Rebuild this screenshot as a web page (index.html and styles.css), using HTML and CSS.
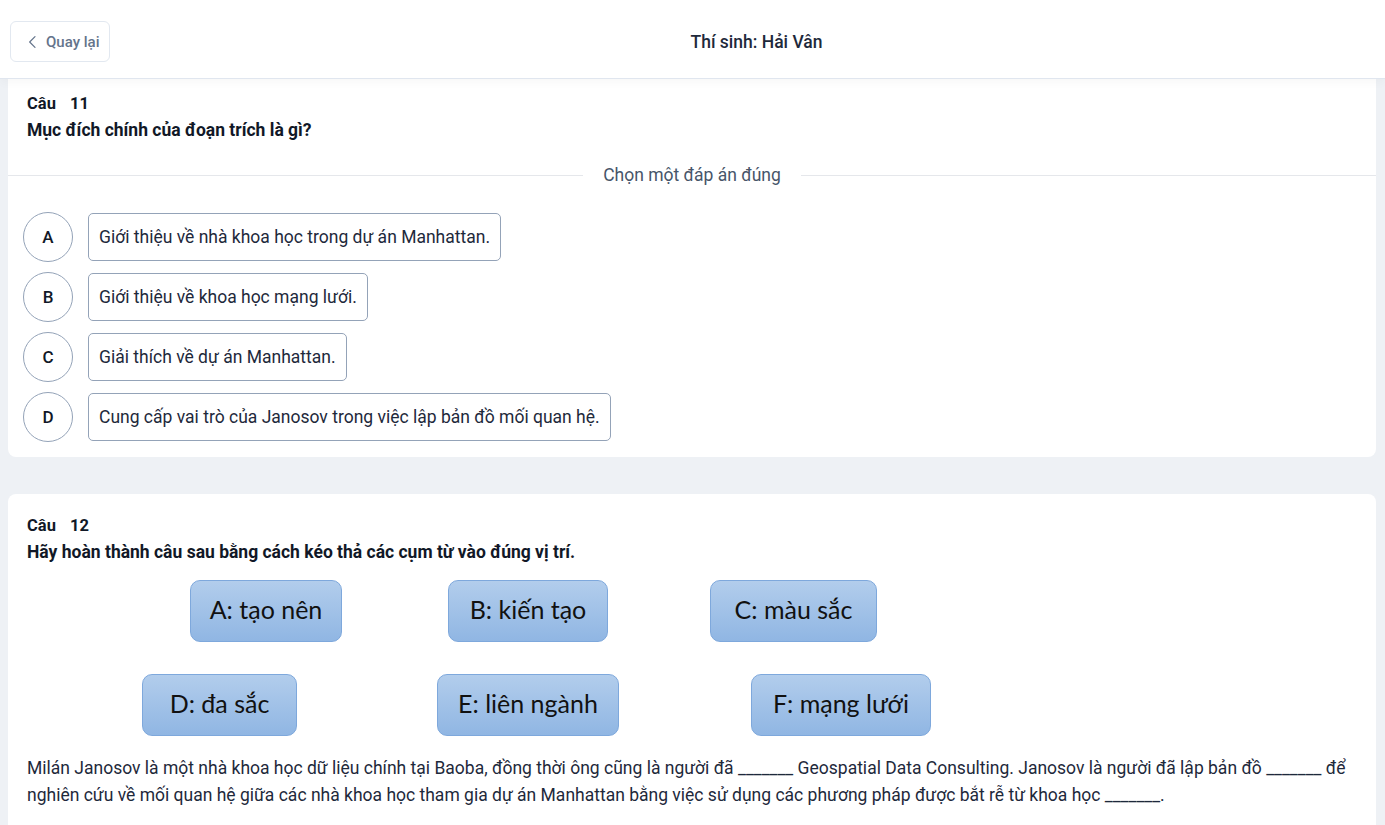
FILE: index.html
```html
<!DOCTYPE html>
<html lang="vi">
<head>
<meta charset="utf-8">
<title>Thí sinh: Hải Vân</title>
<link rel="stylesheet" href="styles.css">
</head>
<body>
<header class="topbar">
  <button class="back-btn" type="button">
    <svg class="back-icon" width="16" height="16" viewBox="0 0 24 24" fill="none" stroke="currentColor" stroke-width="1.8" stroke-linecap="round" stroke-linejoin="round"><path d="M15 4L7 12l8 8"/></svg>
    <span>Quay lại</span>
  </button>
  <div class="title">Thí sinh: Hải Vân</div>
</header>

<main class="main">
  <section class="card card-first">
    <div class="q-num">Câu <span class="q-n">11</span></div>
    <div class="q-text">Mục đích chính của đoạn trích là gì?</div>
    <div class="divider"><span>Chọn một đáp án đúng</span></div>
    <div class="options">
      <div class="option"><div class="opt-letter">A</div><div class="opt-box">Giới thiệu về nhà khoa học trong dự án Manhattan.</div></div>
      <div class="option"><div class="opt-letter">B</div><div class="opt-box">Giới thiệu về khoa học mạng lưới.</div></div>
      <div class="option"><div class="opt-letter">C</div><div class="opt-box">Giải thích về dự án Manhattan.</div></div>
      <div class="option"><div class="opt-letter">D</div><div class="opt-box">Cung cấp vai trò của Janosov trong việc lập bản đồ mối quan hệ.</div></div>
    </div>
  </section>

  <section class="card card-second">
    <div class="q-num">Câu <span class="q-n">12</span></div>
    <div class="q-text">Hãy hoàn thành câu sau bằng cách kéo thả các cụm từ vào đúng vị trí.</div>
    <div class="diagram">
      <div class="chip chip-a">A: tạo nên</div>
      <div class="chip chip-b">B: kiến tạo</div>
      <div class="chip chip-c">C: màu sắc</div>
      <div class="chip chip-d">D: đa sắc</div>
      <div class="chip chip-e">E: liên ngành</div>
      <div class="chip chip-f">F: mạng lưới</div>
    </div>
    <p class="passage">Milán Janosov là một nhà khoa học dữ liệu chính tại Baoba, đồng thời ông cũng là người đã _______ Geospatial Data Consulting. Janosov là người đã lập bản đồ _______ để nghiên cứu về mối quan hệ giữa các nhà khoa học tham gia dự án Manhattan bằng việc sử dụng các phương pháp được bắt rễ từ khoa học _______.</p>
  </section>
</main>
</body>
</html>
```

FILE: styles.css
```css
* { box-sizing: border-box; }
html, body { margin: 0; padding: 0; }
body {
  font-family: Roboto, "Liberation Sans", Arial, sans-serif;
  background: #eef1f5;
  color: #1e293b;
  height: 825px;
  overflow: hidden;
}
.topbar {
  position: relative;
  z-index: 2;
  display: flex;
  align-items: flex-start;
  height: 79px;
  padding: 21px 10px 0 10px;
  background: #ffffff;
  border-bottom: 1px solid #e0e6ef;
  box-shadow: 0 3px 10px rgba(15, 23, 42, 0.035);
}
.back-btn {
  display: flex;
  align-items: center;
  gap: 5px;
  width: 100px;
  height: 41px;
  padding: 0 0 0 14px;
  background: #fff;
  border: 1px solid #e2e8f0;
  border-radius: 6px;
  font-family: Roboto, "Liberation Sans", Arial, sans-serif;
  font-size: 15px;
  font-weight: 500;
  color: #64748b;
  cursor: pointer;
}
.back-icon { color: #64748b; flex: none; }
.title {
  flex: 1;
  margin-left: 28px;
  text-align: center;
  font-size: 17.5px;
  font-weight: 500;
  line-height: 42px;
  color: #1e293b;
}
.main {
  padding: 0 9px 0 8px;
}
.card {
  background: #ffffff;
  border-radius: 8px;
  padding: 17px 19px 16px 19px;
}
.card-first {
  border-radius: 0 0 8px 8px;
  padding-top: 11px;
  padding-bottom: 15px;
}
.card-second {
  margin-top: 37px;
  padding-top: 18px;
  padding-bottom: 30px;
}
.q-num {
  font-size: 16.5px;
  font-weight: 700;
  line-height: 27px;
  color: #111827;
}
.q-n { margin-left: 10px; }
.q-text {
  font-size: 17.5px;
  font-weight: 700;
  line-height: 27px;
  color: #111827;
}
.divider {
  display: flex;
  align-items: center;
  margin: 19px -19px 25px -19px;
  font-size: 17.5px;
  color: #475569;
  line-height: 24px;
}
.divider::before, .divider::after {
  content: "";
  flex: 1;
  border-top: 1px solid #e5e7eb;
}
.divider span { padding: 0 20px; }
.options {
  display: flex;
  flex-direction: column;
  gap: 10px;
  margin-left: -4px;
}
.option {
  display: flex;
  align-items: center;
  gap: 15px;
}
.opt-letter {
  width: 50px;
  height: 50px;
  flex: none;
  border: 1px solid #94a3b8;
  border-radius: 50%;
  display: flex;
  align-items: center;
  justify-content: center;
  font-size: 17px;
  font-weight: 500;
  color: #111827;
}
.opt-box {
  height: 48px;
  display: flex;
  align-items: center;
  padding: 0 10px;
  border: 1px solid #94a3b8;
  border-radius: 5px;
  font-size: 17.5px;
  color: #1e293b;
}
.diagram {
  position: relative;
  height: 189px;
}
.chip {
  position: absolute;
  display: flex;
  align-items: center;
  justify-content: center;
  height: 62px;
  padding-bottom: 4px;
  border: 1.5px solid #7ea8dc;
  border-radius: 10px;
  background: linear-gradient(to bottom, #b2cdec, #90b6e3);
  font-family: Lato, "Open Sans", sans-serif;
  font-size: 25px;
  color: #111111;
}
.chip-a { left: 163px; top: 14px; width: 152px; }
.chip-b { left: 421px; top: 14px; width: 160px; }
.chip-c { left: 683px; top: 14px; width: 167px; }
.chip-d { left: 115px; top: 108px; width: 155px; }
.chip-e { left: 410px; top: 108px; width: 182px; }
.chip-f { left: 724px; top: 108px; width: 180px; }
.passage {
  margin: 0;
  font-size: 17.5px;
  line-height: 27px;
  color: #1e293b;
}
```
